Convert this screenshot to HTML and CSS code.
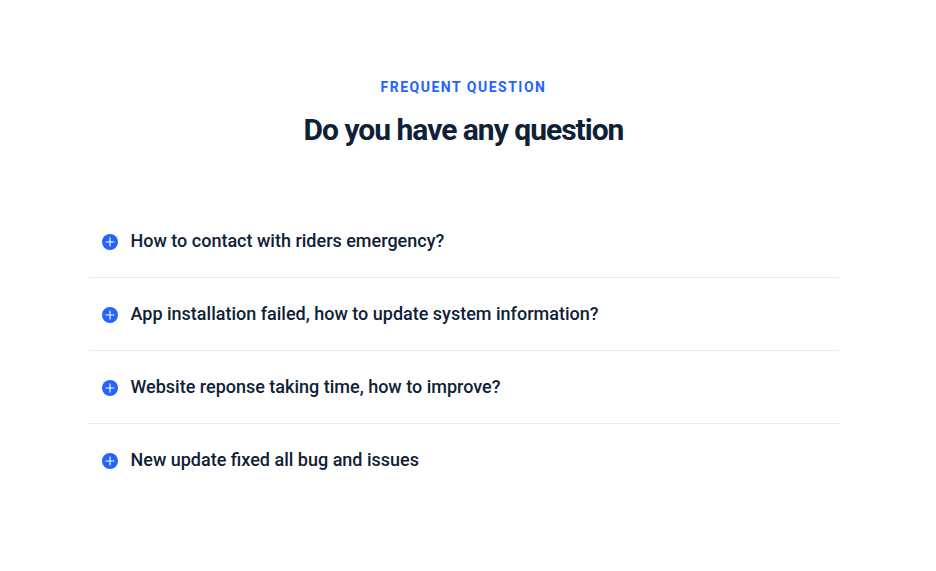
FILE: index.html
```html
<!DOCTYPE html>
<html lang="en">
<head>
<meta charset="utf-8">
<title>Frequent Question</title>
<link rel="stylesheet" href="styles.css">
</head>
<body>
<section class="faq">
  <header class="faq-header">
    <p class="eyebrow">Frequent Question</p>
    <h2 class="title">Do you have any question</h2>
  </header>
  <div class="faq-list">
    <div class="faq-item"><svg class="icon" viewBox="0 0 16 16"><circle cx="8" cy="8" r="8"/><path d="M8 3.5v9M3.5 8h9"/></svg><span class="question">How to contact with riders emergency?</span></div>
    <div class="faq-item"><svg class="icon" viewBox="0 0 16 16"><circle cx="8" cy="8" r="8"/><path d="M8 3.5v9M3.5 8h9"/></svg><span class="question">App installation failed, how to update system information?</span></div>
    <div class="faq-item"><svg class="icon" viewBox="0 0 16 16"><circle cx="8" cy="8" r="8"/><path d="M8 3.5v9M3.5 8h9"/></svg><span class="question">Website reponse taking time, how to improve?</span></div>
    <div class="faq-item"><svg class="icon" viewBox="0 0 16 16"><circle cx="8" cy="8" r="8"/><path d="M8 3.5v9M3.5 8h9"/></svg><span class="question">New update fixed all bug and issues</span></div>
  </div>
</section>
</body>
</html>
```
FILE: styles.css
```css
body {
  margin: 0;
  background: #fff;
  font-family: Roboto, sans-serif;
  color: #0f2137;
}

.faq {
  width: 750px;
  margin-left: 88.5px;
  padding-top: 77px;
}

.faq-header {
  text-align: center;
}

.eyebrow {
  margin: 0 0 11px;
  font-size: 14px;
  line-height: 20px;
  font-weight: 700;
  letter-spacing: 1.5px;
  text-transform: uppercase;
  color: #2563ff;
}

.title {
  margin: 0;
  font-size: 30px;
  line-height: 43px;
  font-weight: 700;
  letter-spacing: -1px;
}

.faq-list {
  margin-top: 54px;
}

.faq-item {
  display: flex;
  align-items: center;
  height: 72px;
  padding-left: 13px;
  border-bottom: 1px solid #e9eaeb;
}

.faq-item:last-child {
  border-bottom: 0;
}

.icon {
  width: 16px;
  height: 16px;
  margin: 2px 13px 0 0;
  fill: #2563ff;
}

.icon path {
  stroke: #fff;
  stroke-width: 1.1;
}

.question {
  margin-bottom: 1px;
  font-size: 18px;
  line-height: 21px;
  font-weight: 500;
}
```
